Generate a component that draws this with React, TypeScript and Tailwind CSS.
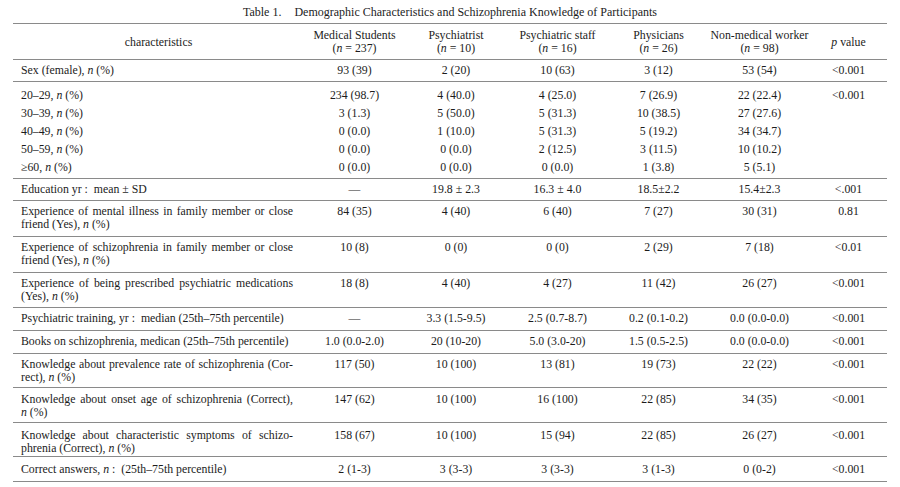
import type { ReactNode } from "react";

const N = () => <i>n</i>;

type Row = {
  label: ReactNode[];
  vals: string[];
  p?: string;
  pad?: string;
};

const SEX: Row = { label: [<>Sex (female), <N /> (%)</>], vals: ["93 (39)", "2 (20)", "10 (63)", "3 (12)", "53 (54)"], p: "<0.001", pad: "pt-[4px] pb-[4px]" };

const AGES: Row[] = [
  { label: [<>20–29, <N /> (%)</>], vals: ["234 (98.7)", "4 (40.0)", "4 (25.0)", "7 (26.9)", "22 (22.4)"], p: "<0.001" },
  { label: [<>30–39, <N /> (%)</>], vals: ["3 (1.3)", "5 (50.0)", "5 (31.3)", "10 (38.5)", "27 (27.6)"] },
  { label: [<>40–49, <N /> (%)</>], vals: ["0 (0.0)", "1 (10.0)", "5 (31.3)", "5 (19.2)", "34 (34.7)"] },
  { label: [<>50–59, <N /> (%)</>], vals: ["0 (0.0)", "0 (0.0)", "2 (12.5)", "3 (11.5)", "10 (10.2)"] },
  { label: [<>≥60, <N /> (%)</>], vals: ["0 (0.0)", "0 (0.0)", "0 (0.0)", "1 (3.8)", "5 (5.1)"] },
];

const REST: Row[] = [
  { label: [<>Education yr :{"\u2002"}mean ± SD</>], vals: ["—", "19.8 ± 2.3", "16.3 ± 4.0", "18.5±2.2", "15.4±2.3"], p: "<.001", pad: "pt-[4px] pb-[4px]" },
  {
    label: [<>Experience of mental illness in family member or close</>, <>friend (Yes), <N /> (%)</>],
    vals: ["84 (35)", "4 (40)", "6 (40)", "7 (27)", "30 (31)"],
    p: "0.81",
    pad: "pt-[4px] pb-[5px]",
  },
  {
    label: [<>Experience of schizophrenia in family member or close</>, <>friend (Yes), <N /> (%)</>],
    vals: ["10 (8)", "0 (0)", "0 (0)", "2 (29)", "7 (18)"],
    p: "<0.01",
    pad: "pt-[4px] pb-[5px]",
  },
  {
    label: [<>Experience of being prescribed psychiatric medications</>, <>(Yes), <N /> (%)</>],
    vals: ["18 (8)", "4 (40)", "4 (27)", "11 (42)", "26 (27)"],
    p: "<0.001",
    pad: "pt-[4px] pb-[4px]",
  },
  {
    label: [<>Psychiatric training, yr :{"\u2002"}median (25th–75th percentile)</>],
    vals: ["—", "3.3 (1.5-9.5)", "2.5 (0.7-8.7)", "0.2 (0.1-0.2)", "0.0 (0.0-0.0)"],
    p: "<0.001",
    pad: "pt-[4px] pb-[5px]",
  },
  {
    label: [<>Books on schizophrenia, medican (25th–75th percentile)</>],
    vals: ["1.0 (0.0-2.0)", "20 (10-20)", "5.0 (3.0-20)", "1.5 (0.5-2.5)", "0.0 (0.0-0.0)"],
    p: "<0.001",
    pad: "pt-[4px] pb-[5px]",
  },
  {
    label: [<>Knowledge about prevalence rate of schizophrenia (Cor-</>, <>rect), <N /> (%)</>],
    vals: ["117 (50)", "10 (100)", "13 (81)", "19 (73)", "22 (22)"],
    p: "<0.001",
    pad: "pt-[4px] pb-[3px]",
  },
  {
    label: [<>Knowledge about onset age of schizophrenia (Correct),</>, <><N /> (%)</>],
    vals: ["147 (62)", "10 (100)", "16 (100)", "22 (85)", "34 (35)"],
    p: "<0.001",
    pad: "pt-[5px] pb-[3px]",
  },
  {
    label: [<>Knowledge about characteristic symptoms of schizo-</>, <>phrenia (Correct), <N /> (%)</>],
    vals: ["158 (67)", "10 (100)", "15 (94)", "22 (85)", "26 (27)"],
    p: "<0.001",
    pad: "pt-[6px] pb-[1px]",
  },
  {
    label: [<>Correct answers, <N /> :{"\u2002"}(25th–75th percentile)</>],
    vals: ["2 (1-3)", "3 (3-3)", "3 (3-3)", "3 (1-3)", "0 (0-2)"],
    p: "<0.001",
    pad: "pt-[6px] pb-[5px]",
  },
];

const HEADS = [
  ["Medical Students", "237"],
  ["Psychiatrist", "10"],
  ["Psychiatric staff", "16"],
  ["Physicians", "26"],
  ["Non-medical worker", "98"],
];

function Label({ lines }: { lines: ReactNode[] }) {
  if (lines.length === 1) return <div className="whitespace-nowrap">{lines[0]}</div>;
  return (
    <>
      <div className="text-justify [text-align-last:justify] whitespace-nowrap">{lines[0]}</div>
      <div className="whitespace-nowrap">{lines[1]}</div>
    </>
  );
}

function BodyRow({ row, cell }: { row: Row; cell: string }) {
  return (
    <tr>
      <td className={`${cell} pl-[8px] pr-[11px] text-left`}>
        <Label lines={row.label} />
      </td>
      {row.vals.map((v, i) => (
        <td key={i} className={`${cell} text-center whitespace-nowrap`}>
          {v}
        </td>
      ))}
      <td className={`${cell} text-center whitespace-nowrap`}>{row.p ?? ""}</td>
    </tr>
  );
}

export default function App() {
  const line = "border-b border-[#8a8a8a]";
  return (
    <div className="w-[900px] h-[487px] bg-white text-[#1c1c1c] overflow-hidden" style={{ fontFamily: '"Liberation Serif", serif' }}>
      {/* Caption */}
      <div className="h-[23px] flex items-center justify-center text-[12px] pt-[1px]">
        <span>Table 1.</span>
        <span className="ml-[13px]">Demographic Characteristics and Schizophrenia Knowledge of Participants</span>
      </div>

      <table className="ml-[13px] w-[874px] table-fixed border-collapse text-[11.8px] leading-[13px]">
        <colgroup>
          <col className="w-[291px]" />
          <col className="w-[101px]" />
          <col className="w-[102px]" />
          <col className="w-[101px]" />
          <col className="w-[101px]" />
          <col className="w-[101px]" />
          <col className="w-[77px]" />
        </colgroup>
        <thead>
          <tr className="border-t border-[#8a8a8a]">
            <th className={`${line} font-normal pt-[5px] pb-[4px] text-center align-middle`}>characteristics</th>
            {HEADS.map(([name, n]) => (
              <th key={name} className={`${line} font-normal pt-[5px] pb-[4px] text-center whitespace-nowrap`}>
                <div>{name}</div>
                <div>
                  (<i>n</i> = {n})
                </div>
              </th>
            ))}
            <th className={`${line} font-normal pt-[5px] pb-[4px] text-center`}>
              <i>p</i> value
            </th>
          </tr>
        </thead>
        <tbody>
          <BodyRow row={SEX} cell={`${line} ${SEX.pad} align-top`} />
          {AGES.map((r, i) => {
            const first = i === 0;
            const last = i === AGES.length - 1;
            const cell = `align-top leading-[18px] ${first ? "pt-[4px]" : ""} ${last ? `pb-[2px] ${line}` : ""}`;
            return <BodyRow key={i} row={r} cell={cell} />;
          })}
          {REST.map((r, i) => (
            <BodyRow key={i} row={r} cell={`${line} ${r.pad} align-top`} />
          ))}
        </tbody>
      </table>
    </div>
  );
}
